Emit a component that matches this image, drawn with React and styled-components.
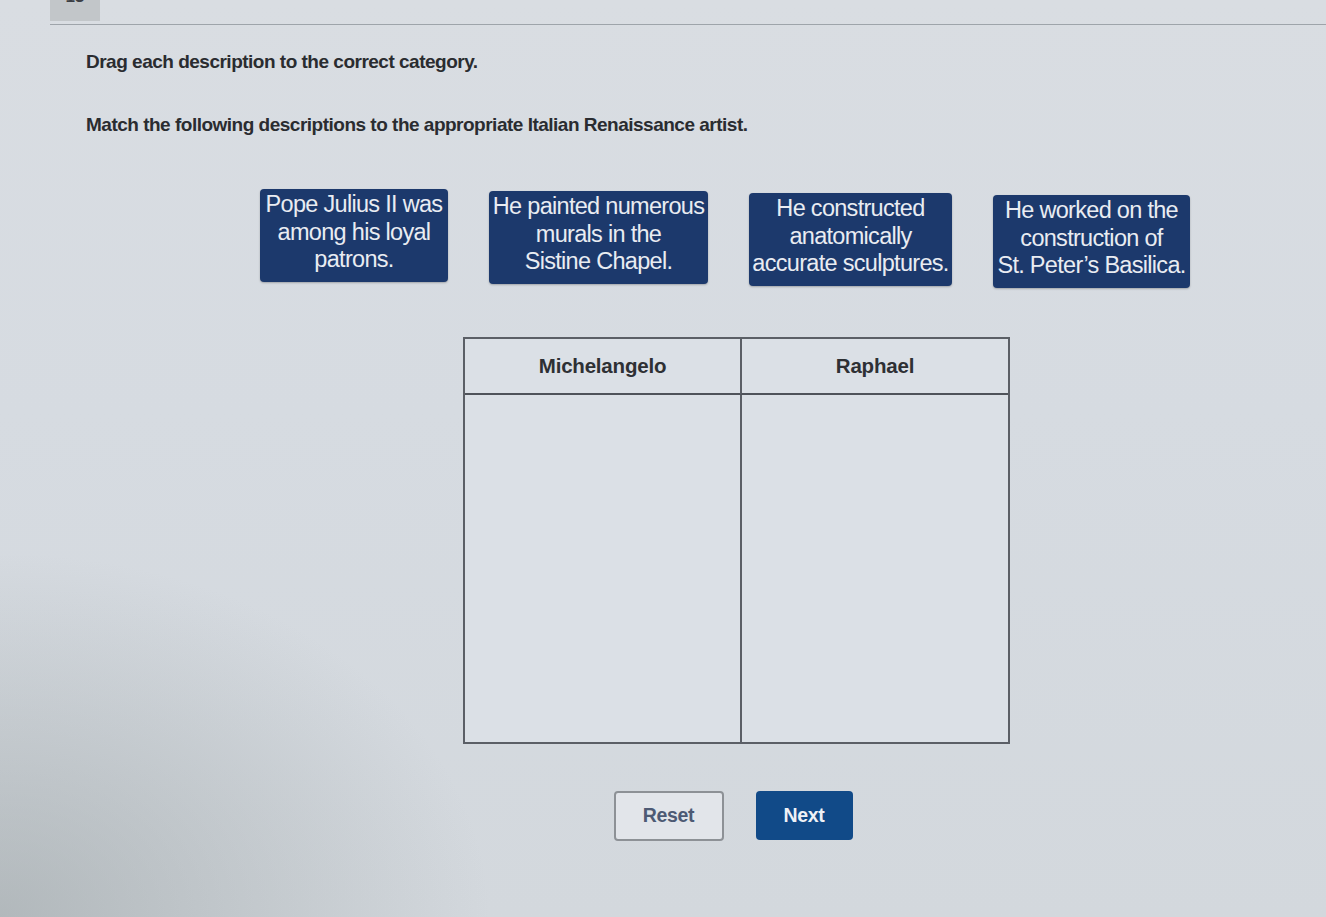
import React from "react";
import styled, { createGlobalStyle } from "styled-components";

const GlobalStyle = createGlobalStyle`
  html, body {
    margin: 0;
    padding: 0;
  }
  body {
    min-height: 100vh;
    font-family: "Liberation Sans", Arial, sans-serif;
    color: #2b2d31;
    background:
      radial-gradient(ellipse 700px 520px at 0% 100%, rgba(150, 158, 160, 0.55), rgba(150, 158, 160, 0) 70%),
      linear-gradient(180deg, #d9dde2 0%, #d6dbe1 45%, #d3d8dd 100%);
  }
`;

const Page = styled.div`
  min-height: 917px;
  padding-left: 50px;
  box-sizing: border-box;
`;

const TopBar = styled.div`
  display: flex;
  align-items: flex-start;
  height: 24px;
  border-bottom: 1px solid #9ea4aa;
`;

const QuestionTab = styled.div`
  width: 50px;
  height: 21px;
  background: #c2c6c9;
  overflow: hidden;
  display: flex;
  justify-content: center;
`;

const TabNumber = styled.span`
  margin-top: -13px;
  font-size: 17px;
  font-weight: 700;
  color: #3b3e44;
  line-height: 20px;
`;

const Instructions = styled.div`
  padding: 26px 0 0 36px;
  display: flex;
  flex-direction: column;
  gap: 42px;
`;

const Prompt = styled.p`
  margin: 0;
  font-size: 19px;
  line-height: 21px;
  font-weight: 700;
  letter-spacing: -0.5px;
  color: #2a2c30;
`;

const Workspace = styled.div`
  padding-left: 90px;
  display: flex;
  flex-direction: column;
  align-items: center;
`;

const CardRow = styled.div`
  margin-top: 54px;
  margin-right: 16px;
  display: flex;
  gap: 41px;
  align-items: flex-start;
`;

const Card = styled.div`
  width: ${(p) => p.$w}px;
  box-sizing: border-box;
  padding: 2px 2px 8px;
  background: #1c396c;
  border-radius: 4px;
  box-shadow: 0 1px 2px rgba(0, 0, 0, 0.25);
  color: #e9ecf2;
  font-size: 23.5px;
  line-height: 27.5px;
  letter-spacing: -0.7px;
  text-align: center;
  margin-top: ${(p) => p.$dy}px;
`;

const CardLine = styled.span`
  display: block;
  white-space: nowrap;
`;

const SortTable = styled.div`
  margin-top: 49px;
  margin-left: 7px;
  box-sizing: border-box;
  width: 547px;
  display: grid;
  grid-template-columns: 275px 1fr;
  grid-template-rows: 56px 347px;
  border: 2px solid #5b5f66;
  background: #dbe0e6;
`;

const HeadCell = styled.div`
  display: flex;
  align-items: center;
  justify-content: center;
  font-size: 20.5px;
  font-weight: 700;
  letter-spacing: -0.2px;
  color: #2e3034;
  border-bottom: 2px solid #4f535a;
  border-left: ${(p) => (p.$first ? "none" : "2px solid #5b5f66")};
`;

const DropCell = styled.div`
  border-left: ${(p) => (p.$first ? "none" : "2px solid #5b5f66")};
`;

const ButtonRow = styled.div`
  margin-top: 47px;
  display: flex;
  gap: 32px;
  align-items: center;
`;

const ActionButton = styled.button`
  box-sizing: border-box;
  width: ${(p) => (p.$primary ? 97 : 110)}px;
  height: ${(p) => (p.$primary ? 49 : 50)}px;
  border-radius: 4px;
  font-family: "Liberation Sans", Arial, sans-serif;
  font-size: 19.5px;
  font-weight: 700;
  letter-spacing: -0.3px;
  cursor: pointer;
  border: ${(p) => (p.$primary ? "none" : "2px solid #8d9196")};
  background: ${(p) => (p.$primary ? "#114a88" : "#e2e5ea")};
  color: ${(p) => (p.$primary ? "#eef1f6" : "#4d5a74")};
`;

const cards = [
  { w: 188, dy: 0, lines: ["Pope Julius II was", "among his loyal", "patrons."] },
  { w: 219, dy: 2, lines: ["He painted numerous", "murals in the", "Sistine Chapel."] },
  { w: 203, dy: 4, lines: ["He constructed", "anatomically", "accurate sculptures."] },
  { w: 197, dy: 6, lines: ["He worked on the", "construction of", "St. Peter\u2019s Basilica."] },
];

const artists = ["Michelangelo", "Raphael"];

export default function App() {
  return (
    <>
      <GlobalStyle />
      <Page>
        <TopBar>
          <QuestionTab>
            <TabNumber>13</TabNumber>
          </QuestionTab>
        </TopBar>
        <Instructions>
          <Prompt>Drag each description to the correct category.</Prompt>
          <Prompt>
            Match the following descriptions to the appropriate Italian Renaissance artist.
          </Prompt>
        </Instructions>
        <Workspace>
          <CardRow>
            {cards.map((c) => (
              <Card key={c.lines[0]} $w={c.w} $dy={c.dy} draggable>
                {c.lines.map((l) => (
                  <CardLine key={l}>{l}</CardLine>
                ))}
              </Card>
            ))}
          </CardRow>
          <SortTable>
            {artists.map((a, i) => (
              <HeadCell key={a} $first={i === 0}>
                {a}
              </HeadCell>
            ))}
            {artists.map((a, i) => (
              <DropCell key={a} $first={i === 0} />
            ))}
          </SortTable>
          <ButtonRow>
            <ActionButton>Reset</ActionButton>
            <ActionButton $primary>Next</ActionButton>
          </ButtonRow>
        </Workspace>
      </Page>
    </>
  );
}
